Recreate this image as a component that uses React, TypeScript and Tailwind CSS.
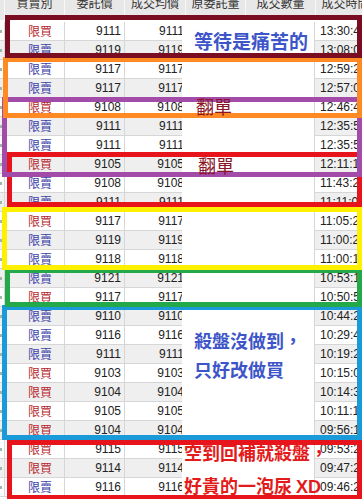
import React from "react";

type Row = [string, string, string];

const rows: Row[] = [
  ["買", "9111", "13:30:42"],
  ["賣", "9119", "13:08:05"],
  ["賣", "9117", "12:59:27"],
  ["賣", "9117", "12:57:03"],
  ["買", "9108", "12:46:41"],
  ["賣", "9111", "12:35:58"],
  ["賣", "9111", "12:35:52"],
  ["買", "9105", "12:11:16"],
  ["賣", "9108", "11:43:21"],
  ["賣", "9111", "11:11:04"],
  ["買", "9117", "11:05:23"],
  ["賣", "9119", "11:00:25"],
  ["賣", "9118", "11:00:12"],
  ["賣", "9121", "10:53:18"],
  ["買", "9117", "10:50:57"],
  ["賣", "9110", "10:44:26"],
  ["賣", "9116", "10:29:44"],
  ["賣", "9111", "10:19:23"],
  ["買", "9103", "10:15:02"],
  ["買", "9104", "10:14:36"],
  ["買", "9105", "10:11:14"],
  ["買", "9104", "09:56:17"],
  ["買", "9115", "09:53:25"],
  ["買", "9114", "09:47:22"],
  ["賣", "9116", "09:46:28"],
];

const cjk = "font-['Noto_Sans_CJK_TC','Noto_Sans_CJK_SC',sans-serif]";
const num = "font-['Liberation_Sans',Arial,sans-serif]";

// colored marker boxes drawn over the table, earlier ones sit on top
const boxes = [
  "left-[5px] top-[15px] w-[357px] h-[43px] border-[#7a0d22]",
  "left-[3px] top-[57px] w-[359px] h-[61px] border-[#ff8a24]",
  "left-[2px] top-[97px] w-[360px] h-[80px] border-[#a24ba8]",
  "left-[7px] top-[152px] w-[355px] h-[55px] border-[#e8141c]",
  "left-[2px] top-[207px] w-[360px] h-[63px] border-[#fff000]",
  "left-[5px] top-[268px] w-[357px] h-[39px] border-[#23a84a]",
  "left-[2px] top-[305px] w-[360px] h-[135px] border-[#1a9ad8]",
  "left-[7px] top-[440px] w-[355px] h-[60px] border-[#e8141c]",
];

export default function App() {
  return (
    <div className="relative w-[362px] h-[499px] overflow-hidden bg-white text-[12px]">
      {/* header */}
      <div className={`flex h-[20px] bg-[#e8e8e8] text-[#333] ${cjk}`}>
        <div className="w-[5px] shrink-0 border-r border-[#f8f8f8]" />
        {[
          ["買賣別", "w-[60px]"],
          ["委託價", "w-[60px]"],
          ["成交均價", "w-[61px]"],
          ["原委託量", "w-[60px]"],
          ["成交數量", "w-[70px]"],
          ["成交時間", "w-[60px]"],
        ].map(([t, w]) => (
          <div
            key={t}
            className={`${w} shrink-0 text-center leading-[14px] -mt-[4px] border-r border-[#f8f8f8] whitespace-nowrap`}
          >
            {t}
          </div>
        ))}
      </div>

      {/* body */}
      <div className="pt-[2px]">
        {rows.map(([side, price, time], i) => {
          const stripe = i % 2 === 1 ? "bg-[#efefef]" : "bg-white";
          return (
            <div key={i} className="flex h-[19px] leading-[18px]">
              <div className={`w-[5px] shrink-0 ${stripe} border-r border-b border-[#d6d6d6] flex items-center`}>
                <span className="w-[2px] h-[3px] bg-[#9fb7a8]" />
              </div>
              <div
                className={`w-[60px] shrink-0 ${stripe} border-r border-b border-[#d6d6d6] pl-[23px] ${cjk} ${
                  side === "買" ? "text-[#b81f2c]" : "text-[#3d3fa8]"
                }`}
              >
                {side === "買" ? "限買" : "限賣"}
              </div>
              <div className={`w-[60px] shrink-0 ${stripe} border-r border-b border-[#d6d6d6] text-right pr-[3px] text-[#222] ${num}`}>
                {price}
              </div>
              <div className={`w-[59px] shrink-0 ${stripe} border-b border-[#d6d6d6] text-right -mr-[2px] overflow-hidden text-[#222] ${num}`}>
                {price}
              </div>
              <div className="w-[132px] shrink-0 bg-white relative z-10" />
              <div className={`w-[60px] shrink-0 ${stripe} border-l border-b border-[#d6d6d6] pl-[5px] text-[#222] ${num} whitespace-nowrap`}>
                {time}
              </div>
            </div>
          );
        })}
      </div>

      {[...boxes].reverse().map((b, i) => (
        <div key={i} className={`absolute border-[5px] ${b} z-20`} />
      ))}

      {/* notes */}
      <div className={`absolute z-30 left-[194px] top-[29px] text-[19px] leading-[24px] font-bold text-[#3d55c8] ${cjk}`}>
        等待是痛苦的
      </div>
      <div className={`absolute z-30 left-[196px] top-[94px] text-[18px] leading-[24px] text-[#8a1526] ${cjk}`}>
        翻單
      </div>
      <div className={`absolute z-30 left-[198px] top-[153px] text-[18px] leading-[24px] text-[#8a1526] ${cjk}`}>
        翻單
      </div>
      <div className={`absolute z-30 left-[194px] top-[326px] text-[18px] leading-[29px] font-bold text-[#3d55c8] ${cjk}`}>
        <div>殺盤沒做到，</div>
        <div>只好改做買</div>
      </div>
      <div className={`absolute z-30 left-[184px] top-[436px] text-[18px] leading-[33px] font-bold text-[#e31b1b] whitespace-nowrap ${cjk}`}>
        <div>空到回補就殺盤，</div>
        <div>
          好貴的一泡尿 <span className={num}>XD</span>
        </div>
      </div>
    </div>
  );
}
